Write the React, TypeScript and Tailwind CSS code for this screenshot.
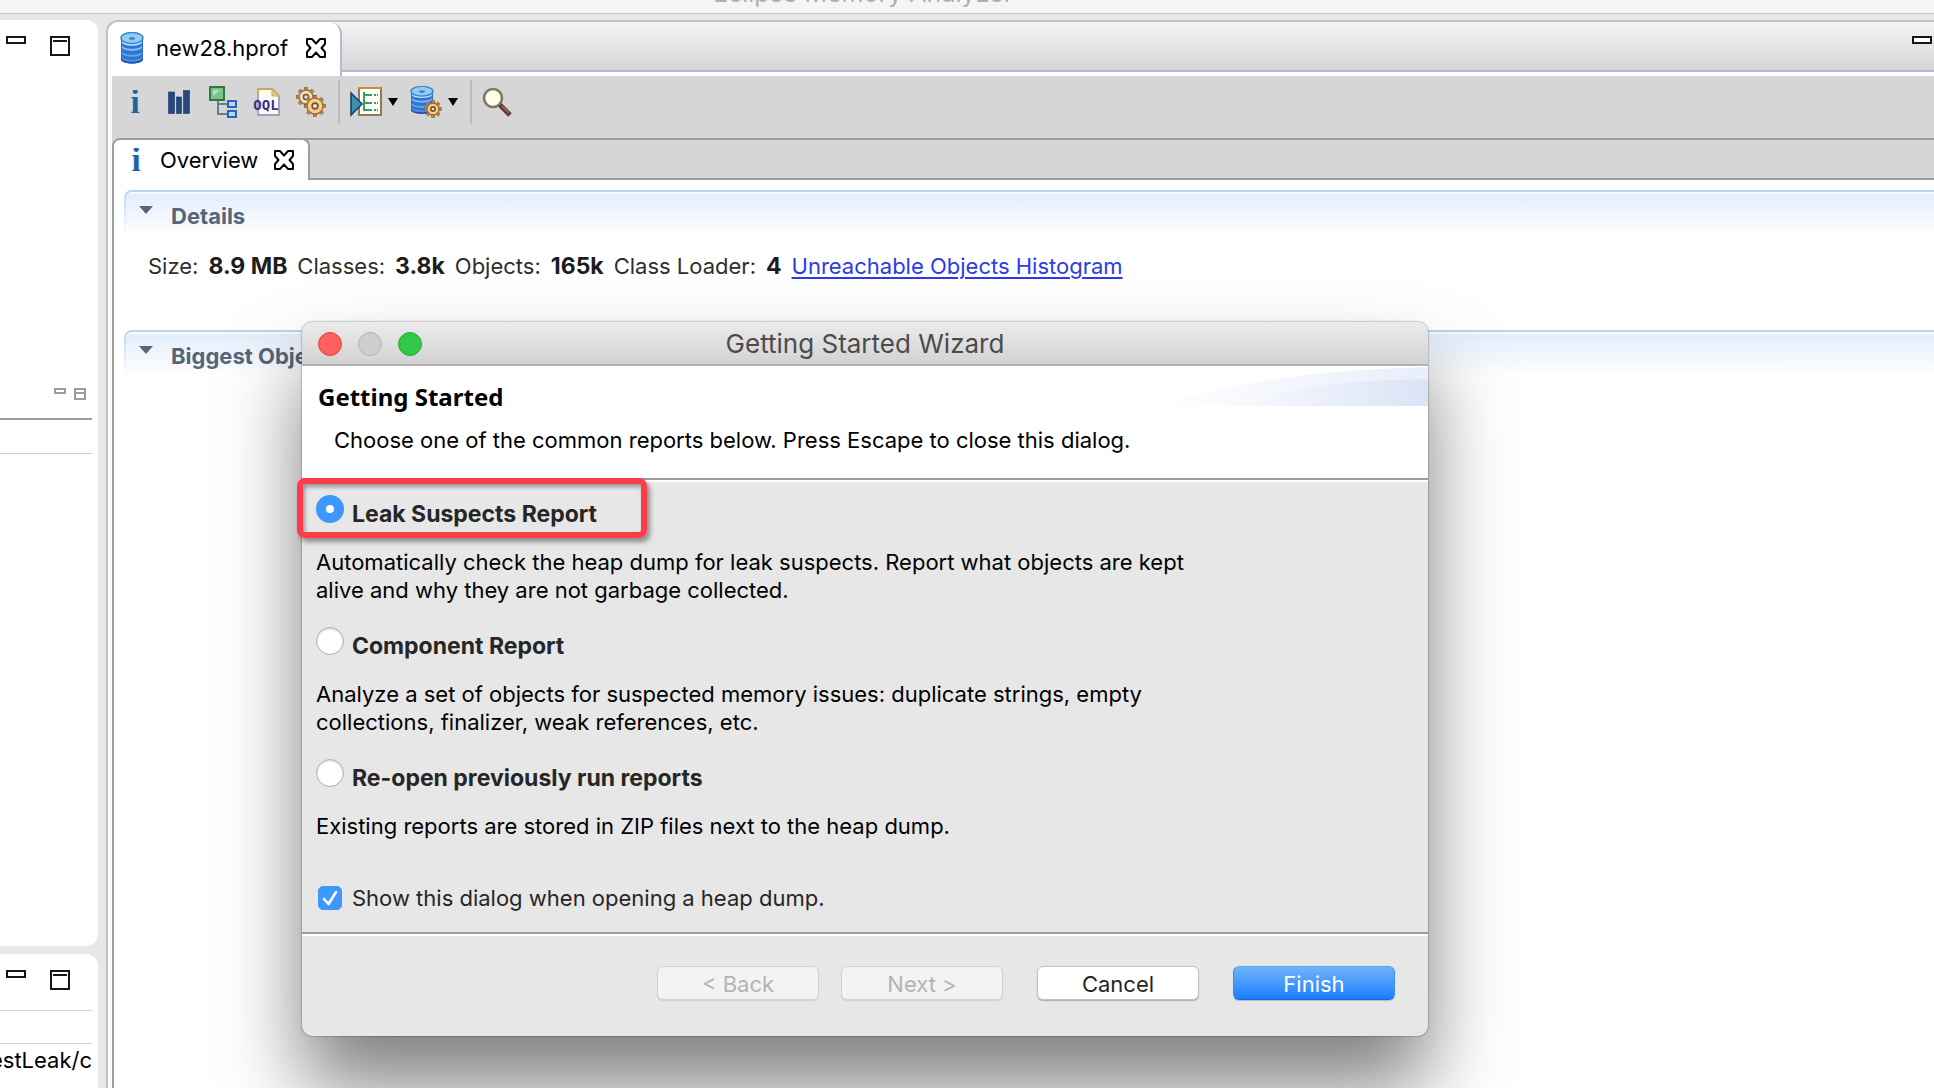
import { useState, type ReactNode } from "react";

function MinimizeIcon() {
  return (
    <svg width="20" height="8" viewBox="0 0 20 8" className="block" aria-hidden="true">
      <rect x="1" y="1" width="18" height="6" fill="#fff" stroke="#161616" strokeWidth="2" />
    </svg>
  );
}

function MaximizeIcon() {
  return (
    <svg width="20" height="20" viewBox="0 0 20 20" className="block" aria-hidden="true">
      <rect x="1" y="1" width="18" height="18" fill="#fff" stroke="#161616" strokeWidth="2" />
      <rect x="3" y="4" width="14" height="2" fill="#161616" />
    </svg>
  );
}

function CloseIcon() {
  return (
    <svg width="20" height="20" viewBox="0 0 20 20" className="block" aria-hidden="true">
      <path
        d="M1 1 H6 L10 5.5 L14 1 H19 V6 L15.5 10 L19 14 V19 H14 L10 14.5 L6 19 H1 V14 L4.5 10 L1 6 Z"
        fill="#fff"
        stroke="#000"
        strokeWidth="1.9"
        strokeLinejoin="round"
      />
    </svg>
  );
}

function InfoIcon() {
  return (
    <svg width="12" height="24" viewBox="0 0 12 24" className="block" aria-hidden="true">
      <text x="6" y="23" textAnchor="middle" fontFamily="Liberation Serif, serif" fontWeight="700" fontSize="33" fill="#1c64a6">
        i
      </text>
    </svg>
  );
}

function DiskStack() {
  return (
    <g>
      <path d="M1 5 V27 C1 33 23 33 23 27 V5 Z" fill="#2f74d0" />
      <path d="M1 25 C1 31 23 31 23 25 V27 C23 33 1 33 1 27 Z" fill="#1b4fb4" />
      <path d="M2 8 C2 13 22 13 22 8 V10 C22 15 2 15 2 10 Z" fill="#b5e0fa" />
      <path d="M2 13 C2 18 22 18 22 13 V15 C22 20 2 20 2 15 Z" fill="#7fc0f2" />
      <path d="M2 19 C2 24 22 24 22 19 V21 C22 26 2 26 2 21 Z" fill="#62a8ec" />
      <path d="M2 24 C2 29 22 29 22 24 V26 C22 31 2 31 2 26 Z" fill="#4d90e4" />
      <ellipse cx="12" cy="6" rx="11" ry="5.5" fill="#8fcdf5" stroke="#3b86d2" strokeWidth="1.5" />
      <ellipse cx="12" cy="6.5" rx="3" ry="1.3" fill="#3a78bd" />
    </g>
  );
}

function DatabaseIcon() {
  return (
    <svg width="24" height="32" viewBox="0 0 24 32" className="block" aria-hidden="true">
      <DiskStack />
    </svg>
  );
}

function Gear({ cx, cy, r, fill = "#f6cf80" }: { cx: number; cy: number; r: number; fill?: string }) {
  const teeth = [0, 45, 90, 135, 180, 225, 270, 315];
  return (
    <g>
      {teeth.map((a) => (
        <rect
          key={a}
          x={cx - 1.6}
          y={cy - r - 2.6}
          width="3.2"
          height="4.5"
          fill="#b98a55"
          stroke="#86592f"
          strokeWidth="0.6"
          transform={`rotate(${a} ${cx} ${cy})`}
        />
      ))}
      <circle cx={cx} cy={cy} r={r} fill={fill} stroke="#9c6c3c" strokeWidth="1.4" />
      <circle cx={cx} cy={cy} r={r * 0.36} fill="#e3e3e3" stroke="#7b4f2a" strokeWidth="1.6" />
    </g>
  );
}

function HistogramIcon() {
  return (
    <svg width="22" height="24" viewBox="0 0 22 24" className="block" aria-hidden="true">
      <g fill="#24487f" stroke="#1a3666" strokeWidth="0.6">
        <rect x="0.5" y="2" width="6" height="21.5" />
        <rect x="8.5" y="7" width="5" height="16.5" />
        <rect x="15.5" y="0.5" width="6" height="23" />
      </g>
    </svg>
  );
}

function TreeIcon() {
  return (
    <svg width="28" height="32" viewBox="0 0 28 32" className="block" aria-hidden="true">
      <path d="M9 13 V28 H18 M9 18 H18" fill="none" stroke="#6a7c93" strokeWidth="2" />
      <rect x="1" y="1" width="14" height="13" fill="#7cc38a" stroke="#2c7a41" strokeWidth="2" />
      <path d="M4 4 H11 L4 10 Z" fill="#b5e2bb" />
      <rect x="19" y="15" width="8" height="6" fill="#a9dcfb" stroke="#2d66b8" strokeWidth="2" />
      <rect x="19" y="25" width="8" height="6" fill="#a9dcfb" stroke="#2d66b8" strokeWidth="2" />
    </svg>
  );
}

function OqlIcon() {
  return (
    <svg width="28" height="30" viewBox="0 0 28 30" className="block" aria-hidden="true">
      <path d="M5 2 H19 L26 9 V28 H5 Z" fill="#fbfbf6" stroke="#9aa0b8" strokeWidth="1.8" />
      <path d="M5 10 V2 H19 L26 9" fill="none" stroke="#c9a75a" strokeWidth="1.8" />
      <path d="M19 2 V9 H26 Z" fill="#e9c987" stroke="#c9a75a" strokeWidth="1" />
      <text x="13" y="23" textAnchor="middle" fontFamily="DejaVu Sans Mono, monospace" fontWeight="700" fontSize="14" fill="#3b2f86">
        OQL
      </text>
    </svg>
  );
}

function GearsIcon() {
  return (
    <svg width="32" height="32" viewBox="0 0 32 32" className="block" aria-hidden="true">
      <Gear cx={11} cy={11} r={7} fill="#ecdcb8" />
      <Gear cx={20} cy={20} r={8} />
    </svg>
  );
}

function RunReportIcon() {
  return (
    <svg width="32" height="30" viewBox="0 0 32 30" className="block" aria-hidden="true">
      <rect x="9" y="1" width="22" height="27" fill="#fcfdf8" stroke="#8a7d58" strokeWidth="2" />
      <path d="M8 1 H31" stroke="#c39335" strokeWidth="2" />
      <g stroke="#3e9a63" strokeWidth="2" fill="none">
        <path d="M14 5 V24 M14 8 H22 M14 16 H22 M14 23 H22" />
        <path d="M24 8 H26 M24 16 H26 M24 23 H26 M27 8 H28 M27 16 H28 M27 23 H28" />
      </g>
      <path d="M1 6 L12 17 L1 28 Z" fill="#3f8fb4" stroke="#17456f" strokeWidth="1.6" />
    </svg>
  );
}

function DatabaseGearIcon() {
  return (
    <svg width="32" height="32" viewBox="0 0 32 32" className="block" aria-hidden="true">
      <g transform="scale(1 0.88)">
        <DiskStack />
      </g>
      <Gear cx={23} cy={23} r={6} />
    </svg>
  );
}

function SearchIcon() {
  return (
    <svg width="30" height="30" viewBox="0 0 30 30" className="block" aria-hidden="true">
      <path d="M17 17 L28 28" stroke="#5a3a38" strokeWidth="5" />
      <path d="M20 19 L27 26" stroke="#a2716a" strokeWidth="1.5" />
      <circle cx="11" cy="11" r="9" fill="#fffbe6" stroke="#77776a" strokeWidth="2.6" />
    </svg>
  );
}

function DropArrow() {
  return (
    <svg width="10" height="8" viewBox="0 0 10 8" className="block" aria-hidden="true">
      <path d="M0 0 H10 L5 8 Z" fill="#000" />
    </svg>
  );
}

function ToolButton({ label, children }: { label: string; children: ReactNode }) {
  return (
    <button type="button" aria-label={label} className="flex h-8 w-11 items-center justify-center">
      {children}
    </button>
  );
}

function Section({ title, children }: { title: string; children?: ReactNode }) {
  return (
    <section className="h-[140px]">
      <div className="rounded-tl-lg bg-linear-to-b from-[#b8d4ee] to-white pt-0.5 pl-0.5">
        <h2 className="flex h-11 gap-[18px] rounded-tl-md border-t-2 border-[#f6faff] bg-linear-to-b from-[#e3eefc] to-white pt-2 pl-[13px] text-[22px] leading-7 font-bold text-[#566678]">
          <svg width="14" height="8" viewBox="0 0 14 8" className="mt-1" aria-hidden="true">
            <path d="M0 0 H14 L7 8 Z" fill="#566678" />
          </svg>
          {title}
        </h2>
      </div>
      {children}
    </section>
  );
}

const stats = [
  ["Size:", "8.9 MB"],
  ["Classes:", "3.8k"],
  ["Objects:", "165k"],
  ["Class Loader:", "4"],
];

const reports = [
  {
    id: "leak",
    name: "Leak Suspects Report",
    text: "Automatically check the heap dump for leak suspects. Report what objects are kept alive and why they are not garbage collected.",
  },
  {
    id: "component",
    name: "Component Report",
    text: "Analyze a set of objects for suspected memory issues: duplicate strings, empty collections, finalizer, weak references, etc.",
  },
  {
    id: "reopen",
    name: "Re-open previously run reports",
    text: "Existing reports are stored in ZIP files next to the heap dump.",
  },
];

function PaneControls() {
  return (
    <div className="flex items-start gap-6 pl-1.5">
      <button type="button" aria-label="Minimize">
        <MinimizeIcon />
      </button>
      <button type="button" aria-label="Maximize">
        <MaximizeIcon />
      </button>
    </div>
  );
}

function Sidebar() {
  return (
    <aside className="flex w-[98px] shrink-0 flex-col gap-2 pt-1.5">
      <div className="flex-1 rounded-r-xl bg-white pt-4 pr-1.5">
        <PaneControls />
        <div className="mt-[332px] flex h-8 justify-end gap-2 border-b-2 border-[#9b9b9b] pr-1.5">
          <svg width="12" height="6" viewBox="0 0 12 6" aria-hidden="true">
            <rect x="1" y="1" width="10" height="4" fill="none" stroke="#9b9b9b" strokeWidth="2" />
          </svg>
          <svg width="12" height="12" viewBox="0 0 12 12" aria-hidden="true">
            <path d="M1 1 H11 V11 H1 Z M1 5 H11" fill="none" stroke="#9b9b9b" strokeWidth="2" />
          </svg>
        </div>
        <div className="h-[34px] border-b border-[#cfcfcf]" />
      </div>
      <div className="h-[134px] rounded-tr-xl bg-white pt-4 pr-1.5">
        <PaneControls />
        <div className="mt-5 h-[34px] border-y border-[#d3d3d3]" />
        <div className="flex justify-end overflow-hidden pt-0.5 text-[22px] leading-7">estLeak/c</div>
      </div>
    </aside>
  );
}

function Wizard() {
  const [choice, setChoice] = useState("leak");
  const [show, setShow] = useState(true);
  const plain = "h-[34px] w-[162px] rounded-md border pt-0.5 text-[22px] leading-7";
  return (
    <div
      role="dialog"
      aria-label="Getting Started Wizard"
      className="absolute top-[322px] left-[302px] w-[1126px] rounded-[10px] bg-[#e7e7e7] shadow-[0_50px_80px_rgba(0,0,0,0.5),0_0_2px_rgba(0,0,0,0.6)]"
    >
      <div className="relative flex h-11 items-center justify-center rounded-t-[10px] border-b-2 border-[#b1b1b1] bg-linear-to-b from-[#ececec] to-[#d2d2d2] pt-0.5">
        <div className="absolute left-4 flex gap-4">
          <button type="button" aria-label="Close" className="size-6 rounded-full border border-[#e2463f] bg-[#fc605c]" />
          <button type="button" aria-label="Minimize" disabled className="size-6 rounded-full border border-[#b4b4b4] bg-[#cecece]" />
          <button type="button" aria-label="Zoom" className="size-6 rounded-full border border-[#27ab35] bg-[#34c84a]" />
        </div>
        <h1 className="text-[26px] leading-8 text-[#4b4b4b]">Getting Started Wizard</h1>
      </div>
      <header className="relative bg-white px-4 pt-[15px] pb-6">
        <svg width="276" height="40" viewBox="0 0 276 40" className="absolute top-0 right-0" aria-hidden="true">
          <defs>
            <linearGradient id="wash" x1="0" x2="1" y1="0" y2="0">
              <stop offset="0" stopColor="#fff" />
              <stop offset="1" stopColor="#e9eefb" />
            </linearGradient>
            <linearGradient id="band" x1="0" x2="1" y1="0" y2="0">
              <stop offset="0" stopColor="#e9effb" stopOpacity="0" />
              <stop offset="1" stopColor="#dae3f6" />
            </linearGradient>
          </defs>
          <path d="M0 40 C90 14 170 4 276 1 V40 Z" fill="url(#wash)" />
          <path d="M80 40 C140 20 200 14 276 13 V40 Z" fill="url(#band)" />
        </svg>
        <h2 className="font-['Noto_Sans',sans-serif] text-2xl leading-8 font-bold">Getting Started</h2>
        <p className="mt-[13px] pl-4 text-[22px] leading-7">
          Choose one of the common reports below. Press Escape to close this dialog.
        </p>
      </header>
      <div className="border-t-2 border-[#9d9d9d]" />
      <div className="border-t-2 border-white px-3.5 pt-[13px] pb-5">
        <div className="flex flex-col gap-[23px]">
          {reports.map((r) => (
            <div key={r.id} className="relative">
              {r.id === "leak" && (
                <div className="pointer-events-none absolute -top-[17px] -left-[19px] h-[60px] w-[350px] rounded-lg border-[6px] border-[#fb3c4a] shadow-[3px_4px_5px_rgba(0,0,0,0.4),inset_2px_3px_4px_rgba(0,0,0,0.35)]" />
              )}
              <div className="flex h-[33px] gap-2">
                <input
                  type="radio"
                  id={r.id}
                  name="report"
                  checked={choice === r.id}
                  onChange={() => setChoice(r.id)}
                  className="size-7 shrink-0 appearance-none rounded-full border border-[#b0b0b0] bg-white shadow-[inset_0_1px_2px_rgba(0,0,0,0.2)] checked:border-[10px] checked:border-[#3e98fb] checked:shadow-none"
                />
                <label htmlFor={r.id} className="pt-[5px] text-[23px] leading-7 font-bold text-[#262626]">
                  {r.name}
                </label>
              </div>
              <p className="mt-5 w-[890px] text-[22px] leading-7">{r.text}</p>
            </div>
          ))}
        </div>
        <div className="mt-11 flex items-center gap-2.5 pl-0.5">
          <span className="relative block size-6">
            <input
              type="checkbox"
              id="show"
              checked={show}
              onChange={(e) => setShow(e.target.checked)}
              className="block size-6 appearance-none rounded-[5px] border border-[#b0b0b0] bg-white checked:border-[#3e98fb] checked:bg-[#3e98fb]"
            />
            {show && (
              <svg width="24" height="24" viewBox="0 0 24 24" className="pointer-events-none absolute top-0 left-0" aria-hidden="true">
                <path d="M6 13 L10.5 18 L18 6" fill="none" stroke="#fff" strokeWidth="2.6" strokeLinecap="round" strokeLinejoin="round" />
              </svg>
            )}
          </span>
          <label htmlFor="show" className="text-[22px] leading-7 text-[#262626]">
            Show this dialog when opening a heap dump.
          </label>
        </div>
      </div>
      <div className="border-t-2 border-[#9d9d9d]" />
      <footer className="flex justify-end gap-[34px] border-t-2 border-white pt-[30px] pr-[33px] pb-9">
        <div className="flex gap-[22px]">
          <button type="button" disabled className={`${plain} border-[#d2d2d2] bg-[#f3f3f3] text-[#b3b3b3] shadow-[0_1px_1px_rgba(0,0,0,0.1)]`}>
            &lt; Back
          </button>
          <button type="button" disabled className={`${plain} border-[#d2d2d2] bg-[#f3f3f3] text-[#b3b3b3] shadow-[0_1px_1px_rgba(0,0,0,0.1)]`}>
            Next &gt;
          </button>
        </div>
        <button type="button" className={`${plain} border-[#c2c2c2] bg-white text-[#262626] shadow-[0_1px_1px_rgba(0,0,0,0.25)]`}>
          Cancel
        </button>
        <button type="button" className={`${plain} border-t-[#5aa5f0] border-r-[#3f90f5] border-b-[#1667e0] border-l-[#3f90f5] bg-linear-to-b from-[#6db3f8] to-[#167dff] text-white shadow-[0_1px_1px_rgba(0,0,0,0.2)]`}>
          Finish
        </button>
      </footer>
    </div>
  );
}

export default function App() {
  return (
    <div className="relative flex h-screen flex-col overflow-hidden bg-[#e7e7e7] font-[Inter,sans-serif] text-black">
      <div className="flex h-3.5 shrink-0 items-end justify-center border-b border-[#cbcbcb] bg-[#f5f5f5] pr-[208px]">
        <span className="pb-1 text-[25px] leading-8 text-[#b0b0b0]">Eclipse Memory Analyzer</span>
      </div>
      <div className="flex min-h-0 flex-1 gap-2">
        <Sidebar />
        <main className="mt-1.5 flex min-w-0 flex-1 flex-col rounded-tl-xl border-t-2 border-l-2 border-[#c1c1c1] bg-white">
          <div className="flex h-[54px] shrink-0">
            <div className="z-10 flex w-[234px] shrink-0 items-start rounded-t-xl border-r-2 border-[#b8b8d0] bg-white pt-2.5 pl-3">
              <DatabaseIcon />
              <span className="mt-0.5 ml-3 w-[150px] text-[22px] leading-7">new28.hprof</span>
              <button type="button" aria-label="Close new28.hprof" className="mt-1.5">
                <CloseIcon />
              </button>
            </div>
            <div className="-ml-3 flex-1">
              <div className="flex h-[50px] justify-end border-b-2 border-[#b8b8d0] bg-linear-to-b from-[#f4f4f4] to-[#d6d6d6] pt-3.5 pr-0.5">
                <button type="button" aria-label="Minimize" className="h-2">
                  <MinimizeIcon />
                </button>
              </div>
            </div>
          </div>
          <div className="flex min-h-0 flex-1 flex-col pl-1">
            <div className="flex h-[62px] shrink-0 items-start bg-[#d6d6d6] pt-1">
              <div className="flex pt-1.5 pl-px">
                <ToolButton label="Overview"><InfoIcon /></ToolButton>
                <ToolButton label="Histogram"><HistogramIcon /></ToolButton>
                <ToolButton label="Dominator tree"><TreeIcon /></ToolButton>
                <ToolButton label="Object query"><OqlIcon /></ToolButton>
                <ToolButton label="Thread overview"><GearsIcon /></ToolButton>
              </div>
              <div className="ml-[5px] h-11 w-0.5 bg-[#bdbdbd]" />
              <div className="flex gap-3 px-2.5 pt-1.5 pr-3">
                <button type="button" aria-label="Run report" className="flex h-8 items-center gap-1.5">
                  <RunReportIcon />
                  <DropArrow />
                </button>
                <button type="button" aria-label="Heap queries" className="flex h-8 items-center gap-1.5">
                  <DatabaseGearIcon />
                  <DropArrow />
                </button>
              </div>
              <div className="h-11 w-0.5 bg-[#bdbdbd]" />
              <button type="button" aria-label="Find object" className="mt-[7px] ml-2.5">
                <SearchIcon />
              </button>
            </div>
            <div className="flex h-[42px] shrink-0 bg-[#d6d6d6]">
              <div className="z-10 flex w-[198px] shrink-0 items-center rounded-t-lg border-t-2 border-r-2 border-l-2 border-[#9e9e9e] bg-white pl-4">
                <InfoIcon />
                <span className="ml-[18px] w-[114px] text-[22px] leading-7">Overview</span>
                <button type="button" aria-label="Close Overview">
                  <CloseIcon />
                </button>
              </div>
              <div className="-ml-2 flex-1 border-t-2 border-[#9e9e9e]">
                <div className="h-10 border-b-2 border-[#9e9e9e]" />
              </div>
            </div>
            <div className="flex-1 border-l-2 border-[#9e9e9e] pt-2.5 pl-2.5">
              <Section title="Details">
                <div className="flex gap-2.5 pt-4 pl-6 text-[22px] leading-7 whitespace-nowrap text-[#2e2e2e]">
                  {stats.map(([k, v]) => (
                    <span key={k} className="flex gap-2.5">
                      {k}
                      <b className="text-[23px] text-[#1c1c1c]">{v}</b>
                    </span>
                  ))}
                  <a href="#histogram" className="text-[#2b3be8] underline decoration-2 underline-offset-3">
                    Unreachable Objects Histogram
                  </a>
                </div>
              </Section>
              <Section title="Biggest Objects" />
            </div>
          </div>
        </main>
      </div>
      <Wizard />
    </div>
  );
}
